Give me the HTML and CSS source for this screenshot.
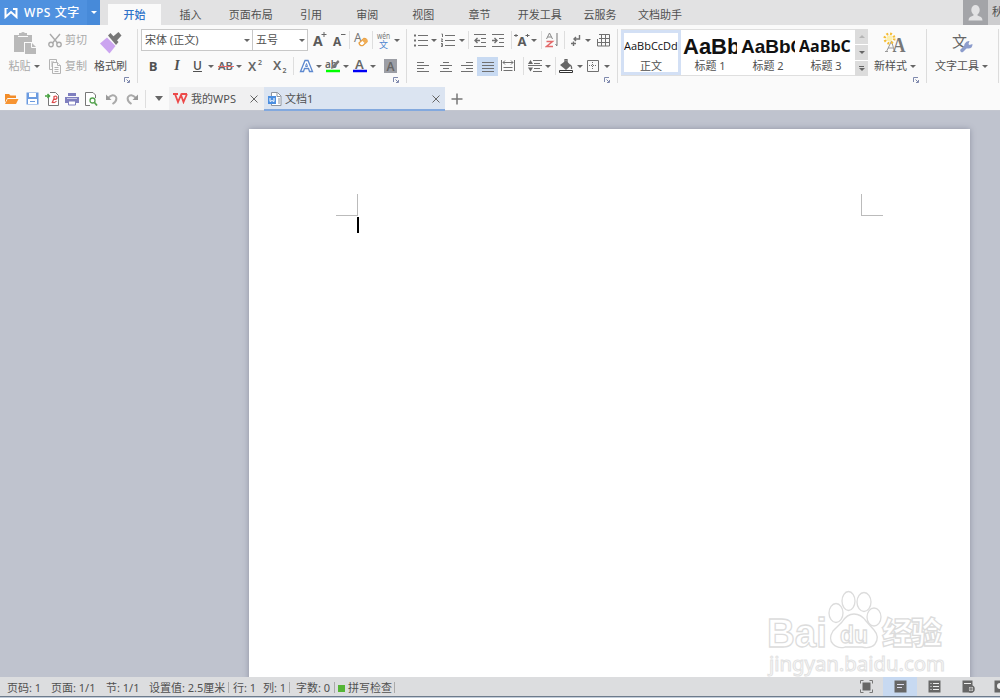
FILE: index.html
```html
<!DOCTYPE html>
<html lang="zh-CN">
<head>
    <meta charset="UTF-8">
    <title>WPS 文字</title>
    <link rel="stylesheet" href="styles.css">
</head>
<body>
    <div class="app">
        <header class="titlebar">
            <div class="brand">
                <svg width="15" height="12" viewBox="0 0 15 12"><path d="M1.500 1v9L7 5l5.500 5V2H9" fill="none" stroke="#fff" stroke-width="2"/><path d="M1 1.500h3" stroke="#fff"/></svg>
                <span class="brand-name">WPS 文字</span>
                <span class="brand-menu"><i class="arr"></i></span>
            </div>
            <nav class="menu">
                <a class="menu-tab active">开始</a>
                <a class="menu-tab">插入</a>
                <a class="menu-tab wide">页面布局</a>
                <a class="menu-tab">引用</a>
                <a class="menu-tab">审阅</a>
                <a class="menu-tab">视图</a>
                <a class="menu-tab">章节</a>
                <a class="menu-tab wide">开发工具</a>
                <a class="menu-tab">云服务</a>
                <a class="menu-tab wide">文档助手</a>
            </nav>
            <div class="user">
                <span class="avatar"><svg width="15" height="16" viewBox="0 0 15 16" fill="#e2e2e4"><ellipse cx="7.500" cy="5" rx="4.200" ry="5"/><path d="M5.500 8h4v2.500l3.500 1.500q1.500 1 1.500 3.500H.5Q.5 13 2 12l3.500-1.500z"/></svg></span>
                <span class="user-name">秋</span>
            </div>
        </header>

        <section class="ribbon">
            <div class="group clipboard">
                <div class="big paste disabled">
                    <svg width="23" height="22" viewBox="0 0 23 22" fill="#b9b9b9"><path d="M1 3h5V1h2q2-2 4 0h2v2h5v7h-8v10H1z"/><path d="M5 4.500h10" stroke="#fafafa"/><path d="M12 11h7l4 4v7H12z"/><path d="M18.500 11v4.500H23" fill="none" stroke="#fafafa"/></svg>
                    <span class="label">粘贴<i class="arr"></i></span>
                </div>
                <div class="pair disabled">
                    <span class="label"><svg width="14" height="15" viewBox="0 0 14 15" fill="none" stroke="#aaa" stroke-width="1.400"><path d="M2 1l7.500 9M12 1L4.500 10"/><circle cx="3" cy="11.500" r="2.200"/><circle cx="11" cy="11.500" r="2.200"/></svg>剪切</span>
                    <span class="label"><svg width="14" height="15" viewBox="0 0 14 15" fill="#fafafa" stroke="#b4b4b4"><path d="M4 10.500H1.500v-10h7V4M3 3h3M3 5h1M3 7h1"/><path d="M4.500 3.500h5l3 3v8h-8z"/><path d="M9.500 3.500v3h3M6.500 8.500h4M6.500 10.500h4M6.500 12.500h4"/></svg>复制</span>
                </div>
                <div class="big brush">
                    <svg width="22" height="22" viewBox="0 0 22 22"><path d="M8 3.500L10.500 1l8 9-2.500 3z" fill="#777"/><path d="M12 5.500L18.500 0 21.500 3.500 16 9.500z" fill="#777"/><path d="M0 11.500L7 5.500l8.500 8.500L9.500 21.500z" fill="#cba4f0"/></svg>
                    <span class="label">格式刷</span>
                </div>
                <svg class="launcher" width="6" height="6" viewBox="0 0 6 6"><path d="M.5 5V.5H5M3 5.500h2.500V3M2.500 2.500l2.500 2.500" fill="none" stroke="#7f89ad"/></svg>
            </div>

            <div class="group font">
                <div class="row font-row-1">
                    <span class="select">宋体 (正文)<i class="arr"></i></span>
                    <span class="select size">五号<i class="arr"></i></span>
                    <svg class="text-icon" width="15" height="16" viewBox="0 0 15 16"><text class="glyph" x="1" y="14" font-size="14">A</text><path d="M12 0v5M9.500 2.500h5" stroke="#666"/></svg>
                    <svg class="text-icon" width="14" height="16" viewBox="0 0 14 16"><text class="glyph" x="1" y="14" font-size="12">A</text><path d="M9 2.500h4.500" stroke="#666"/></svg>
                    <i class="sep"></i>
                    <svg class="text-icon" width="14" height="16" viewBox="0 0 14 16"><text x="0" y="10" class="thin" font-size="12">A</text><path d="M5 11l5-4.500q3 0 3 3L9 13.500q-3 1-4-2.500z" fill="#fff" stroke="#e9a144" stroke-width="1.300"/><path d="M8 8.500l3.500 3.500 2-2-.5-3h-3z" fill="#f0ad55"/></svg>
                    <i class="sep"></i>
                    <svg class="text-icon" width="14" height="17" viewBox="0 0 14 17"><text x="0" y="7" class="thin" font-size="8" textLength="13" lengthAdjust="spacingAndGlyphs">wén</text><text x="2" y="15.500" font-size="9" fill="#4f86d0">文</text></svg>
                    <i class="arr"></i>
                </div>
                <div class="row font-row-2">
                    <b class="letter">B</b>
                    <span class="letter italic">I</span>
                    <span class="letter under">U</span>
                    <i class="arr"></i>
                    <svg width="16" height="14" viewBox="0 0 16 14"><text class="glyph soft" x="0" y="11" font-size="11" textLength="15" lengthAdjust="spacingAndGlyphs">AB</text><path d="M0 7.500h16" stroke="#e46a6a"/></svg>
                    <i class="arr"></i>
                    <svg class="text-icon" width="15" height="17" viewBox="0 0 15 17"><text class="glyph soft" x="0" y="13" font-size="13">X</text><text class="glyph soft" x="10" y="7" font-size="7">2</text></svg>
                    <svg class="text-icon" width="15" height="17" viewBox="0 0 15 17"><text class="glyph soft" x="1" y="12" font-size="13">X</text><text class="glyph soft" x="10.500" y="14.500" font-size="7">2</text></svg>
                    <i class="sep"></i>
                    <svg width="15" height="14" viewBox="0 0 15 14"><path d="M1.500 12.500L6 1.500h3l4.500 11h-3L9.500 9.500h-4L4.500 12.500z" fill="#fff" stroke="#5c88cf" stroke-width="1.300"/><path d="M7.500 4.500L6.500 7.500h2z" fill="#fff" stroke="#5c88cf"/></svg>
                    <i class="arr"></i>
                    <svg class="text-icon" width="16" height="17" viewBox="0 0 16 17"><text class="glyph soft" x="0" y="10" font-size="10">ab</text><path d="M6 11l1-3L13 2l1.500 2L9 10z" fill="#777"/><path d="M1 13h14" stroke="#0f0" stroke-width="2.500"/></svg>
                    <i class="arr"></i>
                    <svg class="text-icon" width="14" height="17" viewBox="0 0 14 17"><text class="glyph soft" x="2" y="10.500" font-size="13">A</text><path d="M0 13h14" stroke="#0000f5" stroke-width="2.500"/></svg>
                    <i class="arr"></i>
                    <svg width="13" height="14" viewBox="0 0 13 14"><path d="M0 0h13v14H0z" fill="#9c9ea5"/><text class="glyph soft" x="2.500" y="11.500" font-size="12">A</text></svg>
                </div>
                <svg class="launcher" width="6" height="6" viewBox="0 0 6 6"><path d="M.5 5V.5H5M3 5.500h2.500V3M2.500 2.500l2.500 2.500" fill="none" stroke="#7f89ad"/></svg>
            </div>

            <div class="group para">
                <div class="row para-row-1">
                    <svg class="line" width="14" height="13" viewBox="0 0 14 13"><path d="M4 1.500h10M4 6.500h10M4 11.500h10"/><path d="M0 1.500h2M0 6.500h2M0 11.500h2" stroke-width="2"/></svg>
                    <i class="arr"></i>
                    <svg class="line" width="14" height="15" viewBox="0 0 14 15"><path d="M4 2.500h10M4 7.500h10M4 12.500h10M.5 1h1v3M0 6h1.500L.5 8.500H2M0 10.500h1.500v3H0M0 12h1"/></svg>
                    <i class="arr"></i>
                    <i class="sep"></i>
                    <svg class="line" width="12" height="13" viewBox="0 0 12 13"><path d="M0 .5h12M7 4.500h5M7 8.500h5M0 12.500h12"/><path d="M1 6.500h5M3.500 4l-2.500 2.500L3.500 9" stroke-width="1.400"/></svg>
                    <svg class="line" width="12" height="13" viewBox="0 0 12 13"><path d="M0 .5h12M7 4.500h5M7 8.500h5M0 12.500h12"/><path d="M0 6.500h5M2.500 4L5 6.500 2.500 9" stroke-width="1.400"/></svg>
                    <i class="sep"></i>
                    <svg class="text-icon" width="16" height="15" viewBox="0 0 16 15"><text class="glyph" x="3.500" y="13" font-size="13">A</text><path d="M0 2.500h4M2.500 1L1 2.500 2.500 4M11.500 2.500h4M13 1l1.500 1.500L13 4" fill="none" stroke="#666"/></svg>
                    <i class="arr"></i>
                    <i class="sep"></i>
                    <svg width="14" height="16" viewBox="0 0 14 16"><path d="M1.500 7L4.500 1l3 6M2.500 5h4" fill="none" stroke="#888"/><path d="M1.500 9.500h6l-6 5h6.500" fill="none" stroke="#e36a6a" stroke-width="1.500"/><path d="M12 1v12.500M10.500 12l1.500 2" fill="none" stroke="#777"/></svg>
                    <i class="sep"></i>
                    <svg class="line" width="11" height="13" viewBox="0 0 11 13"><path d="M9.500 1v4H4M6 3L4 5l2 2M1 9.500h5M3.500 7.500v4.500" stroke-width="1.400"/></svg>
                    <i class="arr"></i>
                    <svg class="line" width="14" height="13" viewBox="0 0 14 13"><path d="M3 .5h10.500v11.500H1.500V5M3 4.500h10M1 8.500h12M5.500 1v11M9.500 1v11"/></svg>
                </div>
                <div class="row para-row-2">
                    <svg class="line" width="12" height="11" viewBox="0 0 12 11"><path d="M0 1.500h7M0 4.500h12M0 7.500h7M0 10.500h12"/></svg>
                    <svg class="line" width="12" height="11" viewBox="0 0 12 11"><path d="M3 1.500h6M0 4.500h12M3 7.500h6M0 10.500h12"/></svg>
                    <svg class="line" width="12" height="11" viewBox="0 0 12 11"><path d="M5 1.500h7M0 4.500h12M5 7.500h7M0 10.500h12"/></svg>
                    <span class="pressed"><svg class="line" width="12" height="11" viewBox="0 0 12 11"><path d="M0 1.500h12M0 4.500h12M0 7.500h12M0 10.500h12"/></svg></span>
                    <svg class="line" width="14" height="12" viewBox="0 0 14 12"><path d="M.5 0v11M13.500 0v11M2 2.500h10M4 .5l-2 2 2 2M10 .5l2 2-2 2M2.500 7.500h9M2.500 10.500h9"/></svg>
                    <i class="sep"></i>
                    <svg class="line" width="14" height="12" viewBox="0 0 14 12"><path d="M5 .5h9M6 3.500h6M0 5.500h14M6 8.500h6M5 11.500h9"/><path d="M0 4l2.500-4L5 4zM0 7.500l2.500 4 2.500-4z" fill="#666" stroke="none"/></svg>
                    <i class="arr"></i>
                    <i class="sep"></i>
                    <svg width="16" height="15" viewBox="0 0 16 15"><path d="M2 6l6-4.500 5 5L8 11z" fill="#666"/><path d="M7 3V.5h2V4M12 6q2 1 1.500 4" fill="none" stroke="#666" stroke-width="1.300"/><path d="M1.500 11.500h13v2h-13z" fill="#fff" stroke="#333"/></svg>
                    <i class="arr"></i>
                    <svg class="line" width="12" height="12" viewBox="0 0 12 12"><path d="M.5.5h11v11H.5z"/><path d="M2 5.500h8M5.500 2v8" stroke-dasharray="1 1"/></svg>
                    <i class="arr"></i>
                </div>
                <svg class="launcher" width="6" height="6" viewBox="0 0 6 6"><path d="M.5 5V.5H5M3 5.500h2.500V3M2.500 2.500l2.500 2.500" fill="none" stroke="#7f89ad"/></svg>
            </div>

            <div class="group styles">
                <div class="gallery">
                    <div class="style-card selected"><span class="sample">AaBbCcDd</span><span>正文</span></div>
                    <div class="style-card"><span class="sample h1">AaBb</span><span>标题 1</span></div>
                    <div class="style-card"><span class="sample h2">AaBbC</span><span>标题 2</span></div>
                    <div class="style-card"><span class="sample h3">AaBbC</span><span>标题 3</span></div>
                    <div class="scroller">
                        <span><i class="arr up"></i></span>
                        <span><i class="arr"></i></span>
                        <span class="more"><i class="arr"></i></span>
                    </div>
                </div>
                <div class="big new-style">
                    <svg width="24" height="22" viewBox="0 0 24 22"><path d="M3.500 19.500L8.500 9l3 10.500M5 16h5M2 19.500h3" fill="none" stroke="#999"/><text x="9.500" y="19.500" font-size="20" class="serif" fill="#777" font-weight="bold" textLength="13" lengthAdjust="spacingAndGlyphs">A</text><circle cx="6.500" cy="6.500" r="4.800" fill="none" stroke="#f5bd36" stroke-width="2.500" stroke-dasharray="1.900 1.870"/><circle cx="6.500" cy="6.500" r="3" fill="#fbefb0"/></svg>
                    <span class="label">新样式<i class="arr"></i></span>
                </div>
                <svg class="launcher" width="6" height="6" viewBox="0 0 6 6"><path d="M.5 5V.5H5M3 5.500h2.500V3M2.500 2.500l2.500 2.500" fill="none" stroke="#7f89ad"/></svg>
            </div>

            <div class="group tools">
                <div class="big">
                    <svg width="22" height="22" viewBox="0 0 22 22"><text x="1" y="14.500" font-size="15" fill="#666">文</text><path d="M11 18.500l4.500-4.500" stroke="#8c9ccc" stroke-width="3.500" stroke-linecap="round"/><path d="M18.500 9l-1 3 1 1 3-1q0 5-5 4.500-4-1-3-4.500 2-3.500 5-3z" fill="#8c9ccc"/></svg>
                    <span class="label">文字工具<i class="arr"></i></span>
                </div>
            </div>
        </section>

        <section class="docbar">
            <div class="quick">
                <svg width="15" height="12" viewBox="0 0 15 12"><path d="M1 11V1h4l1.500 1.500H12V5" fill="#f28c28"/><path d="M3.500 5.500H14L11.500 11H1z" fill="#f28c28" stroke="#fafafa"/><path d="M4 6h10.500L12 11H1z" fill="#f79431"/></svg>
                <svg width="13" height="13" viewBox="0 0 13 13"><path d="M.5.5h12v12H.5z" fill="#6b9be0"/><path d="M3 1h7v4H3zM2 7h9v5H2z" fill="#fff"/><path d="M4 9.500h5" stroke="#6b9be0"/></svg>
                <svg width="15" height="14" viewBox="0 0 15 14"><path d="M3.500 6V13.500h10V3.500l-3-3H5" fill="#fff" stroke="#777"/><path d="M7 11l2-4.500V4.500q3-1 3 1t-3 2M7.500 10q2 1.500 4-1" fill="none" stroke="#dd4b4b" stroke-width="1.200"/><path d="M0 4h4M2.500 2l2 2-2 2" fill="none" stroke="#45a13f" stroke-width="1.500"/></svg>
                <svg width="14" height="14" viewBox="0 0 14 14"><path d="M3 1h8v3H3zM0 5h14v6H0z" fill="#7f7fbf"/><path d="M3.500 9h7v4h-7z" fill="#fff" stroke="#7f7fbf"/><path d="M2 6.500h10" stroke="#c9c9e6"/></svg>
                <svg width="14" height="14" viewBox="0 0 14 14"><path d="M11.500 6V3L9 .5H1.500v13H6" fill="#fff" stroke="#777"/><circle cx="8.500" cy="8.500" r="2.500" fill="#fff" stroke="#55a24f" stroke-width="1.300"/><path d="M10.500 10.500L13 13.500" stroke="#55a24f" stroke-width="1.800"/></svg>
                <svg width="12" height="12" viewBox="0 0 12 12"><path d="M2 5q5-5 8-1 1.500 4-3.500 7" fill="none" stroke="#aaa" stroke-width="2"/><path d="M0 1.500V7h5.500z" fill="#999"/></svg>
                <svg width="12" height="12" viewBox="0 0 12 12"><path d="M10 5Q5 0 2 4 .5 8 5.500 11" fill="none" stroke="#aaa" stroke-width="2"/><path d="M12 1.500V7H6.500z" fill="#999"/></svg>
                <i class="sep"></i>
                <i class="arr large"></i>
            </div>
            <div class="doc-tab home">
                <svg width="15" height="11" viewBox="0 0 15 11"><path d="M0 1h5M2 1l3 8 3-7 2.500 7L14 1M8.500 1H14" fill="none" stroke="#ec4949" stroke-width="1.800"/></svg>
                <span>我的WPS</span>
                <svg class="close" width="8" height="8" viewBox="0 0 8 8"><path d="M.5.5l7 7M7.500.5l-7 7"/></svg>
            </div>
            <div class="doc-tab current">
                <svg width="14" height="14" viewBox="0 0 14 14"><path d="M3.500 4V.5h6L13 4v9.500H3.500V11" fill="#fff" stroke="#8f959f"/><path d="M9 1v3.500h3.500M10 7h2M10 9h2M10 11h2" fill="none" stroke="#8f959f"/><path d="M0 4h8v8H0z" fill="#4b8ee0"/><path d="M2 6v3.500l2-1 2 1V6" fill="none" stroke="#fff"/></svg>
                <span>文档1</span>
                <svg class="close" width="8" height="8" viewBox="0 0 8 8"><path d="M.5.5l7 7M7.500.5l-7 7"/></svg>
            </div>
            <svg class="plus" width="12" height="12" viewBox="0 0 12 12"><path d="M6 .5v11M.5 6h11" stroke="#777" stroke-width="1.500"/></svg>
        </section>

        <main class="workspace">
            <div class="page">
                <div class="margins">
                    <i class="corner left"></i>
                    <i class="corner right"></i>
                </div>
                <i class="caret"></i>
            </div>
            <svg class="watermark" width="190" height="92" viewBox="0 0 190 92">
                <g class="outline">
                    <text class="logo" x="2" y="57" font-size="41" textLength="60" lengthAdjust="spacingAndGlyphs">Bai</text>
                    <ellipse cx="71" cy="23" rx="7" ry="9.500"/>
                    <ellipse cx="83.500" cy="11" rx="6.500" ry="9.500"/>
                    <ellipse cx="99" cy="12" rx="7" ry="9.500"/>
                    <ellipse cx="109" cy="27" rx="7" ry="9"/>
                    <path d="M89 24q-7 0-12 8l-9 9q-5 8 0 13 5 5 12 3h17q9 2 13-3 5-7-1-14l-8-9q-5-7-12-7z"/>
                    <text class="logo" x="75" y="53" font-size="24" textLength="28" lengthAdjust="spacingAndGlyphs">du</text>
                    <text x="117" y="54" font-size="31" font-weight="900" textLength="60">经验</text>
                </g>
                <text class="site" x="4" y="81" font-size="19" textLength="176" lengthAdjust="spacingAndGlyphs">jingyan.baidu.com</text>
            </svg>
        </main>

        <footer class="statusbar">
            <div class="info">
                <span class="w-page">页码: 1</span>
                <span class="w-pages">页面: 1/1</span>
                <span class="w-section">节: 1/1</span>
                <span class="w-set bar">设置值: 2.5厘米</span>
                <span class="w-line">行: 1</span>
                <span class="w-col bar">列: 1</span>
                <span class="w-count bar">字数: 0</span>
                <span class="spell bar"><i class="ok"></i>拼写检查</span>
            </div>
            <div class="views">
                <span><svg width="13" height="13" viewBox="0 0 13 13"><path d="M2.500 2.500h8v8h-8z" fill="#666"/><path d="M.5 3.500v-3h3M9.500.5h3v3M12.500 9.500v3h-3M3.500 12.500h-3v-3" fill="none" stroke="#777"/></svg></span>
                <span class="on"><svg width="13" height="13" viewBox="0 0 13 13"><path d="M.5.500h12v12H.5z" fill="#666"/><path d="M3 4.500h7M3 7.500h5" stroke="#dde"/></svg></span>
                <span><svg width="13" height="13" viewBox="0 0 13 13"><path d="M.5.500h12v12H.5z" fill="#666"/><path d="M2.500 3.500h1M5 3.500h6M2.500 6.500h1M5 6.500h6M2.500 9.500h1M5 9.500h6" stroke="#eee"/></svg></span>
                <span><svg width="13" height="13" viewBox="0 0 13 13"><path d="M.5.500h10v12H.5z" fill="#666"/><path d="M2 3.500h7" stroke="#eee"/><circle cx="9" cy="9" r="3" fill="#eee" stroke="#666" stroke-width="1.500"/><path d="M6 9h6M9 6v6" stroke="#666"/></svg></span>
                <span class="cut"><svg width="13" height="13" viewBox="0 0 13 13"><path d="M.5.500h12v12H.5z" fill="#666"/><circle cx="6" cy="6" r="3" fill="#eee"/></svg></span>
            </div>
        </footer>
    </div>
</body>
</html>
```
FILE: styles.css
```css
* {
    box-sizing: border-box;
}
body, html {
    margin: 0;
    padding: 0;
    height: 100%;
    overflow: hidden;
}
body {
    font-family: "Noto Sans", "Noto Sans CJK SC", sans-serif;
    font-size: 11px;
    line-height: 16px;
    color: #505050;
}
svg {
    display: block;
    flex: none;
}
.app {
    display: flex;
    flex-direction: column;
    width: 1000px;
    height: 698px;
    background: #fafafa;
}

/* small shared pieces */
.arr {
    display: inline-block;
    flex: none;
    border: 3px solid transparent;
    border-top: 3px solid #666;
    border-bottom: 0;
}
.arr.up {
    border-top: 0;
    border-bottom: 3px solid #b5b5b5;
}
.arr.large {
    border-width: 5px 4.5px 0;
}
.sep {
    width: 1px;
    height: 18px;
    background: #dedede;
}
.text-icon {
    overflow: visible;
}
.glyph {
    fill: #5a5a5a;
    font-weight: bold;
}
.glyph.soft {
    fill: #666;
    font-weight: 600;
}
.thin {
    fill: #777;
}
.serif {
    font-family: "Liberation Serif", serif;
}
.line {
    fill: none;
    stroke: #707070;
}

/* title bar */
.titlebar {
    display: flex;
    height: 25px;
    background: #e2e2e3;
}
.brand {
    display: flex;
    align-items: center;
    width: 100px;
    padding-left: 4px;
    background: #4f91df;
    color: #fff;
}
.brand-name {
    width: 63px;
    margin-left: 5px;
    font-size: 12px;
    font-weight: 500;
    letter-spacing: 0.6px;
    white-space: nowrap;
}
.brand-menu {
    display: flex;
    align-items: center;
    justify-content: center;
    flex: 1;
    height: 25px;
    background: #478ad9;
}
.brand-menu .arr {
    border-top-color: #fff;
}
.menu {
    display: flex;
    align-items: flex-end;
    margin-left: 8px;
}
.menu-tab {
    width: 56.2px;
    height: 21px;
    line-height: 22px;
    text-align: center;
}
.menu-tab.wide {
    width: 64.2px;
}
.menu-tab.active {
    width: 53px;
    margin-right: 1.5px;
    background: #fafafa;
    color: #2f73c9;
    font-weight: 500;
}
.user {
    display: flex;
    width: 37px;
    margin-left: auto;
    background: #cdcdcf;
    overflow: hidden;
}
.avatar {
    display: flex;
    align-items: center;
    justify-content: center;
    flex: none;
    width: 25px;
    background: #a3a4a8;
}
.user-name {
    padding-left: 4px;
    line-height: 24px;
}

/* ribbon */
.ribbon {
    display: flex;
    height: 62px;
    padding-top: 4px;
}
.group {
    position: relative;
    flex: none;
    height: 54px;
    border-right: 1px solid #dcdcdc;
}
.launcher {
    position: absolute;
    right: 7px;
    bottom: 0;
}
.clipboard {
    display: flex;
    width: 138px;
    padding-left: 9px;
}
.big {
    display: flex;
    flex-direction: column;
    align-items: center;
    justify-content: space-between;
    height: 45px;
    padding-top: 3px;
}
.label {
    display: flex;
    align-items: center;
    white-space: nowrap;
}
.big .label .arr {
    margin-left: 3px;
}
.disabled {
    color: #a9a9a9;
}
.paste {
    width: 30px;
}
.pair {
    display: flex;
    flex-direction: column;
    justify-content: space-between;
    height: 45px;
    padding-top: 3px;
    margin-left: 9px;
}
.pair svg {
    margin-right: 3px;
}
.brush {
    margin-left: 7px;
}
.row {
    display: grid;
    align-items: center;
    justify-items: center;
    height: 22px;
}
.row + .row {
    margin-top: 4px;
}
.font {
    width: 269px;
    padding-left: 3px;
}
.font-row-1 {
    grid-template-columns: 112px 55px 22px 17px 4px 20px 3px 20px 5px;
}
.font-row-2 {
    grid-template-columns: 24px 24px 17px 10px 19px 7px 26px 23px 5px 20px 6px 21px 6px 21px 6px 28px;
}
.select {
    display: flex;
    align-items: center;
    justify-content: space-between;
    justify-self: stretch;
    height: 22px;
    padding: 0 2px 0 3px;
    border: 1px solid #c8c8c8;
    background: #fff;
}
.select.size {
    border-left: 0;
}
.letter {
    font-family: "Open Sans", sans-serif;
    font-size: 13px;
    font-weight: bold;
}
.italic {
    font-family: "Liberation Serif", serif;
    font-size: 14px;
    font-style: italic;
}
.under {
    font-size: 12px;
    font-weight: 600;
    text-decoration: underline;
}
.para {
    width: 211px;
    padding-left: 4px;
}
.para-row-1 {
    grid-template-columns: 20px 6px 22px 6px 6px 18px 18px 8px 14px 10px 4px 18px 6px 16px 10px 20px;
}
.para-row-2 {
    grid-template-columns: 24px 22px 20px 21px 20px 10px 14px 12px 2px 20px 7px 20px 7px;
}
.pressed {
    display: flex;
    align-items: center;
    justify-content: center;
    width: 21px;
    height: 19px;
    background: #c8daf2;
}
.styles {
    display: flex;
    width: 309px;
    padding-left: 3px;
}
.gallery {
    display: flex;
    width: 247px;
    height: 47px;
    border: 1px solid #dfdfdf;
    border-right: 0;
    background: #fff;
}
.style-card {
    display: flex;
    flex-direction: column;
    align-items: center;
    width: 58px;
    overflow: hidden;
    padding-top: 4px;
}
.style-card.selected {
    width: 60px;
    margin-left: -1px;
    padding-top: 0;
    border: 3px solid #d3e0f5;
}
.sample {
    flex: none;
    width: 54px;
    height: 24px;
    font-family: "Open Sans", sans-serif;
    font-size: 11px;
    line-height: 26px;
    color: #111;
    white-space: nowrap;
    overflow: hidden;
}
.selected .sample {
    height: 25px;
}
.selected span + span {
    line-height: 15px;
}
.sample.h1 {
    font: bold 22px/26px "Liberation Sans", sans-serif;
}
.sample.h2 {
    font: bold 19px/26px "Liberation Sans", sans-serif;
}
.sample.h3 {
    font: bold 16px/25px "Open Sans", sans-serif;
}
.scroller {
    display: flex;
    flex-direction: column;
    flex: 1;
    gap: 1px;
    margin: -1px 0;
}
.scroller span {
    display: flex;
    flex-direction: column;
    align-items: center;
    justify-content: center;
    flex: 1;
    background: #dcdcdc;
}
.scroller .more::before {
    content: "";
    width: 5px;
    height: 1px;
    margin-bottom: 1px;
    background: #666;
}
.new-style {
    margin-left: 6px;
}
.tools {
    display: flex;
    width: 72px;
    padding-left: 8px;
}

/* quick access and document tabs */
.docbar {
    display: flex;
    height: 24px;
    border-bottom: 1px solid #c3c6cf;
}
.quick {
    display: grid;
    grid-template-columns: 22px 20px 20px 19px 20px 21px 20px 6px 21px;
    align-items: center;
    justify-items: center;
    width: 169px;
}
.doc-tab {
    display: flex;
    align-items: center;
    height: 24px;
    padding: 0 6px 0 4px;
}
.doc-tab span {
    margin-left: 3px;
}
.doc-tab .close {
    margin-left: auto;
    stroke: #666;
}
.home {
    width: 95px;
    height: 23px;
    background: #f0f0f1;
}
.current {
    width: 181px;
    padding-top: 1px;
    padding-right: 5px;
    border-bottom: 2px solid #83a9de;
    background: #dbe4f1;
}
.plus {
    align-self: center;
    margin-left: 6px;
}

/* document area */
.workspace {
    position: relative;
    flex: 1;
    padding: 18px 30px 0 249px;
    background: #bfc3ce;
    overflow: hidden;
}
.page {
    height: 560px;
    padding-top: 65px;
    background: #fff;
    box-shadow: 0 0 6px #8f93a3;
}
.margins {
    display: flex;
    justify-content: space-between;
    padding: 0 87px;
}
.corner {
    width: 22px;
    height: 22px;
    border-bottom: 1px solid #bbb;
}
.corner.left {
    border-right: 1px solid #bbb;
}
.corner.right {
    border-left: 1px solid #bbb;
}
.caret {
    display: block;
    width: 2px;
    height: 16px;
    margin: 1px 0 0 108px;
    background: #000;
}
.watermark {
    position: absolute;
    left: 765px;
    bottom: -5px;
}
.outline {
    fill: #fff;
    stroke: #dcdcdc;
    stroke-width: 1.3px;
}
.logo {
    font-family: "Liberation Sans", sans-serif;
    font-weight: bold;
}
.site {
    fill: #fff;
    stroke: #e2e2e2;
    stroke-width: 1px;
}

/* status bar */
.statusbar {
    display: flex;
    justify-content: space-between;
    height: 21px;
    border-bottom: 1px solid #c2ccd8;
    background: #dcdddf;
    box-shadow: inset 0 -1px #6d7b8c;
}
.info {
    display: flex;
    align-items: center;
    padding: 1px 0 0 7px;
    white-space: nowrap;
}
.bar {
    background: linear-gradient(#aaa, #aaa) right / 1px 11px no-repeat;
}
.w-page {
    width: 44px;
}
.w-pages {
    width: 55px;
}
.w-section {
    width: 43px;
}
.w-set {
    width: 80px;
    margin-right: 4px;
}
.w-line {
    width: 30px;
}
.w-col {
    width: 27px;
    margin-right: 6px;
}
.w-count {
    width: 39px;
    margin-right: 3px;
}
.spell {
    width: 57px;
}
.ok {
    display: inline-block;
    width: 7px;
    height: 7px;
    margin-right: 3px;
    background: #55b535;
}
.views {
    display: flex;
    height: 19px;
}
.views span {
    display: flex;
    align-items: center;
    justify-content: center;
    width: 34px;
}
.views .on {
    background: #c7d9f1;
}
.views .cut {
    width: 15px;
    justify-content: flex-start;
    padding-left: 9px;
    overflow: hidden;
}
```
